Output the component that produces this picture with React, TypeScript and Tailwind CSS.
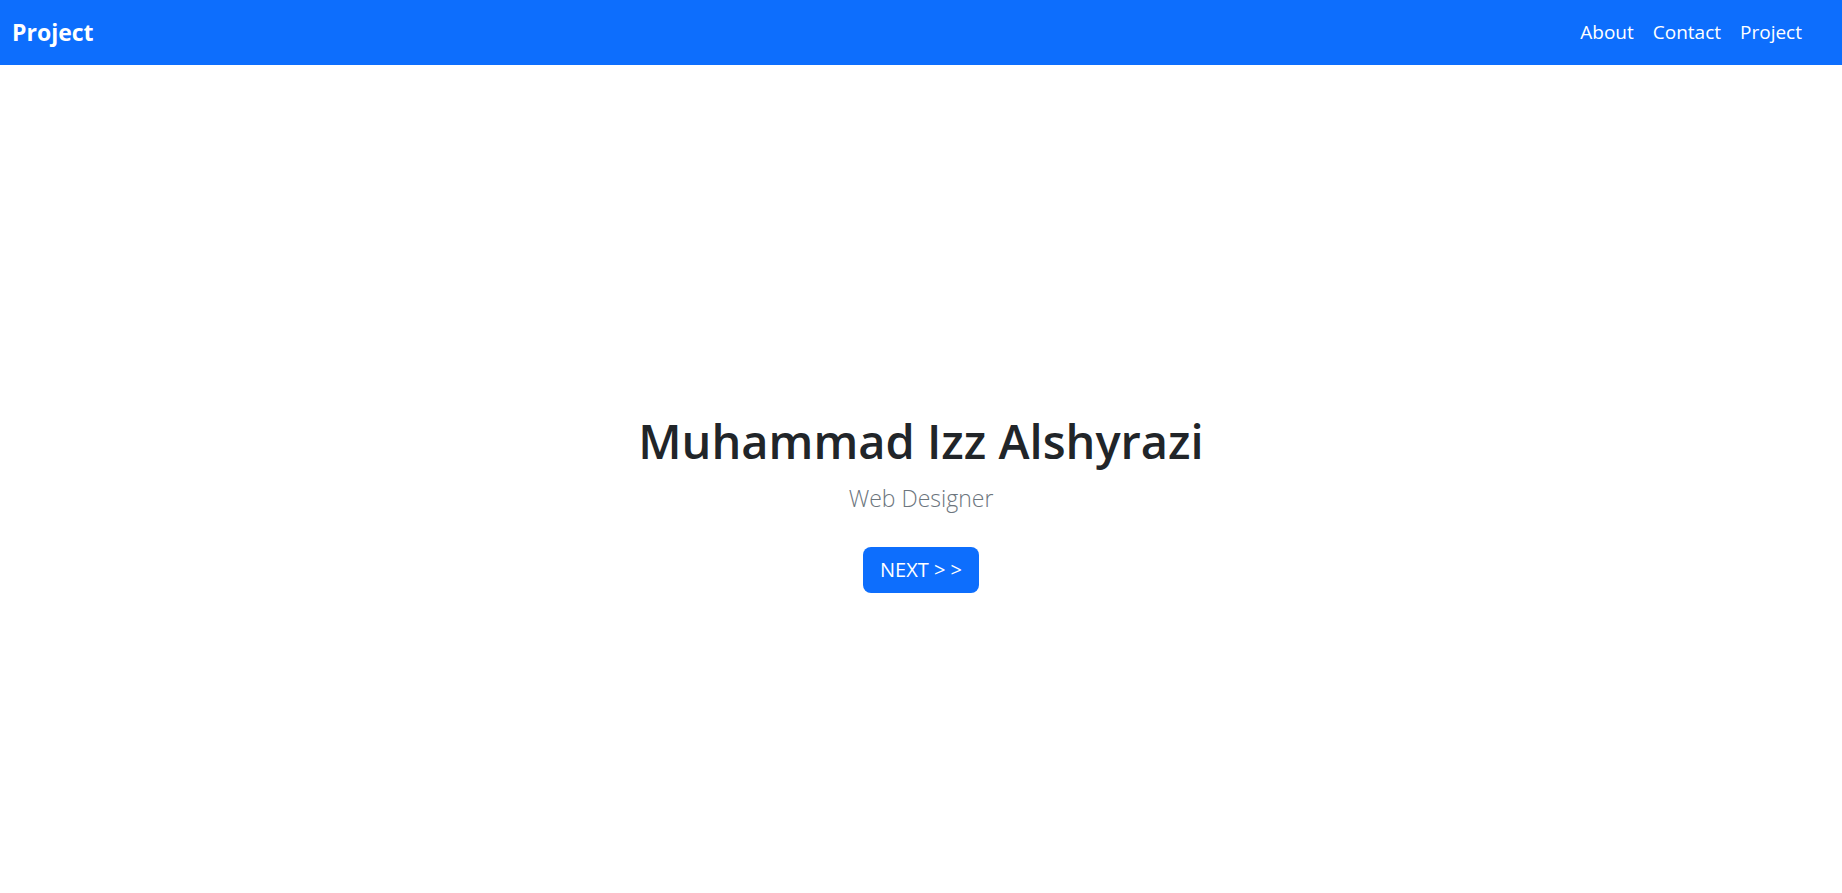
export default function App() {
  const font = { fontFamily: '"Segoe UI", "Open Sans", "Noto Sans", sans-serif' };
  return (
    <div className="flex h-screen flex-col bg-white" style={font}>
      <nav className="flex h-[65px] shrink-0 items-center justify-between bg-[#0d6efd] pl-3 pr-[40px]">
        <a className="text-[23px] font-bold text-white">Project</a>
        <div className="flex items-center gap-[19px] text-[19px] text-white">
          <a>About</a>
          <a>Contact</a>
          <a>Project</a>
        </div>
      </nav>
      <main className="flex flex-1 flex-col items-center justify-center pt-[48px]">
        <h1 className="text-[47px] font-semibold leading-[1.2] text-[#212529]">Muhammad Izz Alshyrazi</h1>
        <p className="mt-[12px] text-[23px] font-light leading-[1.5] text-[#6c757d]">Web Designer</p>
        <button className="mt-[31px] rounded-[8px] bg-[#0d6efd] px-[17px] py-[8px] text-[20px] leading-[1.5] text-white">
          NEXT &gt; &gt;
        </button>
      </main>
    </div>
  );
}
